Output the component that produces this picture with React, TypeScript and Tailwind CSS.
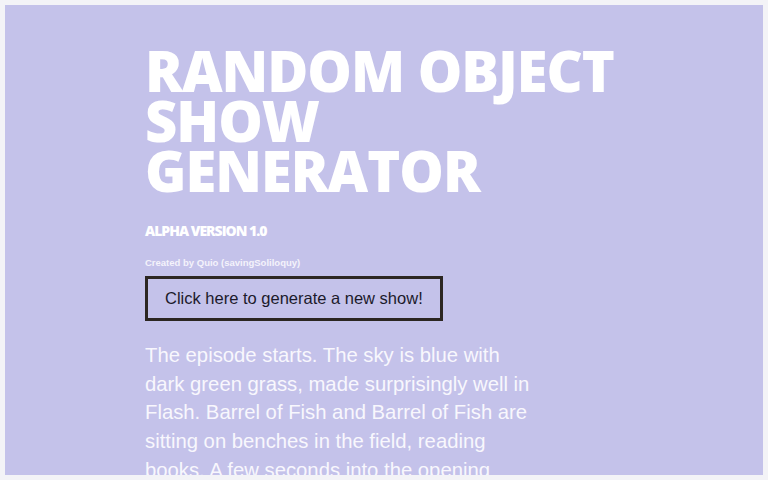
export default function App() {
  return (
    <div className="h-[480px] w-[768px] bg-[#f3f3f7] p-[5px]">
      <main className="h-[470px] overflow-hidden bg-[#c4c2ea] pl-[140px] pt-[40px]">
        <h1 className="font-['Open_Sans',sans-serif] text-[56px] font-extrabold uppercase leading-[50px] tracking-[-1px] text-white">
          Random Object
          <br />
          Show
          <br />
          Generator
        </h1>
        <h2 className="mt-[26px] font-['Open_Sans',sans-serif] text-[14px] font-extrabold uppercase leading-[20px] tracking-[-1px] text-white">
          Alpha Version 1.0
        </h2>
        <p className="mt-[16px] font-['Liberation_Sans',Arial,sans-serif] text-[9.5px] font-bold leading-[12px] text-[#f4f3fb]">
          Created by Quio (savingSoliloquy)
        </p>
        <button className="mt-[7px] border-[3px] border-[#2c2622] bg-transparent px-[17px] py-[10px] font-['Liberation_Sans',Arial,sans-serif] text-[16.5px] leading-[19px] text-[#1c1a2c]">
          Click here to generate a new show!
        </button>
        <p className="mt-[20px] w-[395px] font-['Liberation_Sans',Arial,sans-serif] text-[20.3px] leading-[28.7px] text-[#f8f7fd]">
          The episode starts. The sky is blue with dark green grass, made
          surprisingly well in Flash. Barrel of Fish and Barrel of Fish are
          sitting on benches in the field, reading books. A few seconds into the
          opening scene, something starts to happen.
        </p>
      </main>
    </div>
  );
}
